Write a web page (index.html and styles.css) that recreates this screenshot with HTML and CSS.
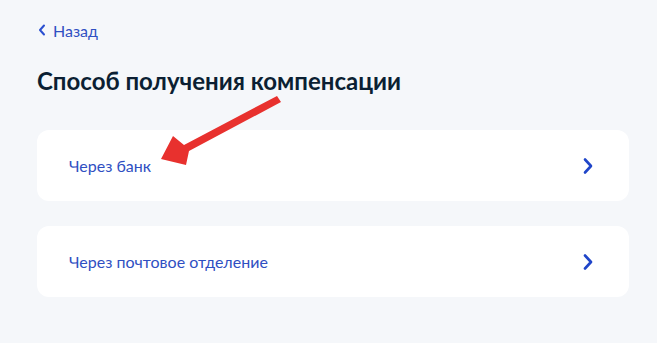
FILE: index.html
```html
<!doctype html>
<html lang="ru">
<head>
  <meta charset="UTF-8" />
  <title>Способ получения компенсации</title>
  <link rel="stylesheet" href="styles.css">
</head>
<body>
  <div class="page">
    <a class="back" href="#">
      <svg class="back-icon" width="8" height="12" viewBox="0 0 8 12"><path d="M6 1.5 L2 6 L6 10.5" fill="none" stroke="#2a4fd0" stroke-width="2" stroke-linecap="round" stroke-linejoin="round"/></svg>
      Назад
    </a>
    <h1>Способ получения компенсации</h1>

    <div class="options">
      <a class="option" href="#">
        <span>Через банк</span>
        <svg width="12" height="18" viewBox="0 0 12 18"><path d="M3 2.5 L9 9 L3 15.5" fill="none" stroke="#1f45c9" stroke-width="2.6" stroke-linecap="round" stroke-linejoin="round"/></svg>
      </a>
      <a class="option" href="#">
        <span>Через почтовое отделение</span>
        <svg width="12" height="18" viewBox="0 0 12 18"><path d="M3 2.5 L9 9 L3 15.5" fill="none" stroke="#1f45c9" stroke-width="2.6" stroke-linecap="round" stroke-linejoin="round"/></svg>
      </a>
    </div>
  </div>

  <!-- red pointer drawn over the screenshot -->
  <svg class="pointer" width="657" height="343" viewBox="0 0 657 343">
    <polygon points="161,159 173,136 184,145 277,96 281,102 189,151 186,165" fill="#e8312e"/>
  </svg>
</body>
</html>
```

FILE: styles.css
```css
body, html {
  margin: 0;
  padding: 0;
  height: 100%;
  background: #f5f7fa;
  font-family: 'Lato', 'Noto Sans', sans-serif;
  overflow: hidden;
}
.page {
  width: 592px;
  padding: 20px 0 0 37px;
}
.back {
  display: flex;
  align-items: center;
  gap: 7px;
  color: #2f4fc2;
  font-size: 16px;
  text-decoration: none;
  padding-left: 1px;
  height: 20px;
}
h1 {
  margin: 26px 0 0;
  font-size: 24px;
  font-weight: 700;
  color: #0b1f33;
  line-height: 30px;
}
.options {
  display: flex;
  flex-direction: column;
  gap: 25px;
  margin-top: 34px;
}
.option {
  display: flex;
  align-items: center;
  justify-content: space-between;
  height: 71px;
  padding: 0 35px 0 32px;
  background: #fff;
  border-radius: 12px;
  color: #2f4fc2;
  font-size: 16px;
  text-decoration: none;
}
.pointer {
  position: absolute;
  top: 0;
  left: 0;
  pointer-events: none;
}
```
